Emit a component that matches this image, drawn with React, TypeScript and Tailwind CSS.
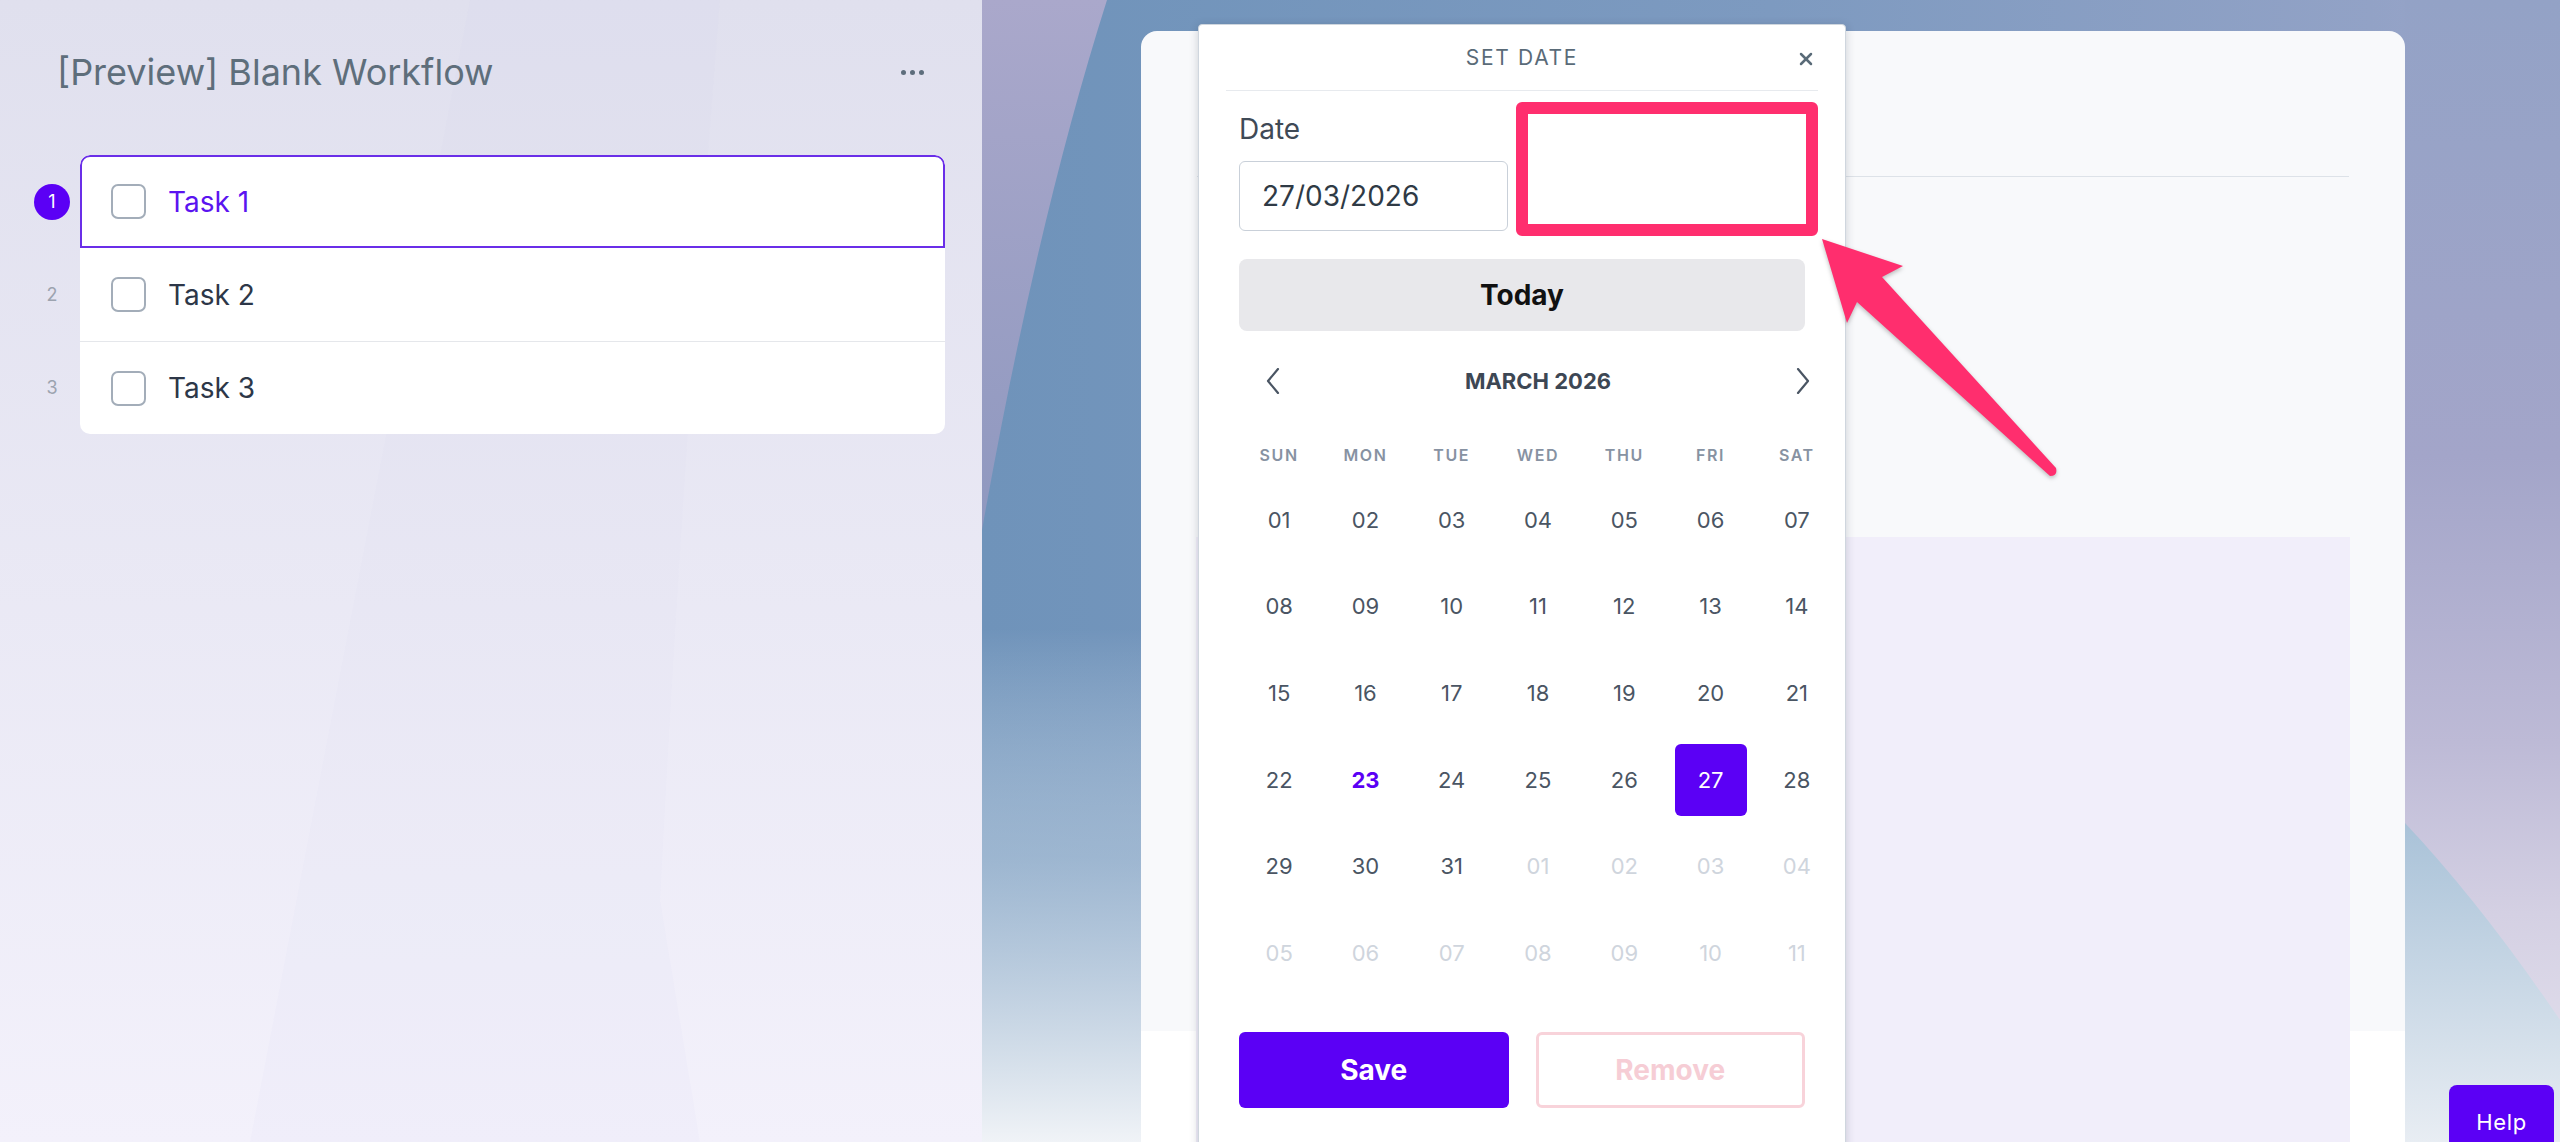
import { X } from 'lucide-react'

const WEEKDAYS = ['SUN', 'MON', 'TUE', 'WED', 'THU', 'FRI', 'SAT']

type Day = { label: string; muted?: boolean; selected?: boolean; today?: boolean }

// March 2026 starts on a Sunday, 6 rows shown
const DAYS: Day[] = [
  ...Array.from({ length: 31 }, (_, i) => ({
    label: String(i + 1).padStart(2, '0'),
    selected: i + 1 === 27,
    today: i + 1 === 23,
  })),
  ...Array.from({ length: 11 }, (_, i) => ({ label: String(i + 1).padStart(2, '0'), muted: true })),
]

const TASKS = ['Task 1', 'Task 2', 'Task 3']

function Checkbox() {
  return <div className="h-[35px] w-[35px] shrink-0 rounded-[7px] border-2 border-[#a3adb9] bg-white" />
}

function Chevron({ dir }: { dir: 'left' | 'right' }) {
  return (
    <svg width="14" height="26" viewBox="0 0 14 26" fill="none" stroke="#4a5563" strokeWidth="2.2" strokeLinecap="round" strokeLinejoin="round">
      {dir === 'left' ? <path d="M12 1 L2 13 L12 25" /> : <path d="M2 1 L12 13 L2 25" />}
    </svg>
  )
}

function Backdrop() {
  // wallpaper drawing behind the right side
  return (
    <svg className="absolute inset-0" width="1578" height="1142" viewBox="0 0 1578 1142">
      <defs>
        <linearGradient id="bgH" x1="0" x2="1" y1="0" y2="0">
          <stop offset="0" stopColor="#6f93ba" />
          <stop offset="0.5" stopColor="#7d9ac0" />
          <stop offset="0.88" stopColor="#92a2c6" />
          <stop offset="1" stopColor="#9ea6ca" />
        </linearGradient>
        <linearGradient id="fadeL" x1="0" x2="0" y1="0" y2="1">
          <stop offset="0" stopColor="#ffffff" stopOpacity="0" />
          <stop offset="0.55" stopColor="#ffffff" stopOpacity="0" />
          <stop offset="0.75" stopColor="#c9d8e6" stopOpacity="0.5" />
          <stop offset="0.92" stopColor="#dfe7ef" stopOpacity="0.88" />
          <stop offset="1" stopColor="#f0f3f7" stopOpacity="1" />
        </linearGradient>
        <linearGradient id="rightV" x1="0" x2="0" y1="0" y2="1">
          <stop offset="0" stopColor="#93a2c6" />
          <stop offset="0.4" stopColor="#a3a5c9" />
          <stop offset="0.65" stopColor="#bdbad6" />
          <stop offset="0.8" stopColor="#d4d0e3" />
          <stop offset="1" stopColor="#e8e5f0" />
        </linearGradient>
        <linearGradient id="blueBR" x1="0" x2="0" y1="0" y2="1">
          <stop offset="0" stopColor="#a9c2d8" />
          <stop offset="1" stopColor="#e8edf3" />
        </linearGradient>
        <linearGradient id="purp" x1="0" x2="0" y1="0" y2="1">
          <stop offset="0" stopColor="#aaa8cb" />
          <stop offset="1" stopColor="#8f98bf" />
        </linearGradient>
      </defs>
      <rect width="1578" height="1142" fill="url(#bgH)" />
      <rect width="1578" height="1142" fill="url(#fadeL)" />
      <rect x="1423" width="155" height="1142" fill="url(#rightV)" />
      <path d="M1423 823 Q1500 905 1578 1020 V1142 H1423 Z" fill="url(#blueBR)" />
      <path d="M0 0 H125 Q55 220 0 530 Z" fill="url(#purp)" />
    </svg>
  )
}

export default function App() {
  return (
    <div className="relative flex h-[1142px] w-[2560px] overflow-hidden font-['Inter',sans-serif]">
      {/* Left: workflow task list */}
      <div className="relative w-[982px] shrink-0 bg-linear-to-b from-[#e0e0ee] to-[#f3f1fb]">
        <svg className="absolute inset-0" width="982" height="1142">
          <path d="M470 0 H720 Q680 500 660 900 L700 1142 H250 Z" fill="#c9cce6" opacity="0.06" />
        </svg>
        <div className="relative">
          <div className="mt-[52px] flex h-[40px] items-center justify-between pl-[57px] pr-[58px]">
            <h1 className="text-[36px] leading-[40px] text-[#5e6e7b]">[Preview] Blank Workflow</h1>
            <div className="flex gap-[4px]">
              <span className="h-[5px] w-[5px] rounded-full bg-[#5d6d7c]" />
              <span className="h-[5px] w-[5px] rounded-full bg-[#5d6d7c]" />
              <span className="h-[5px] w-[5px] rounded-full bg-[#5d6d7c]" />
            </div>
          </div>

          <div className="mt-[63px] flex pl-[34px]">
            <div className="mr-[10px] flex w-[36px] flex-col">
              {TASKS.map((_, i) => (
                <div key={i} className="flex h-[93px] items-center justify-center">
                  {i === 0 ? (
                    <div className="flex h-[36px] w-[36px] items-center justify-center rounded-full bg-[#5b00f5] text-[18px] text-white">1</div>
                  ) : (
                    <span className="text-[18px] text-[#9ca3af]">{i + 1}</span>
                  )}
                </div>
              ))}
            </div>
            <div className="w-[865px] overflow-hidden rounded-[10px] bg-white">
              <div className="flex h-[93px] items-center gap-[22px] rounded-t-[10px] border-2 border-[#6a2ee8] pl-[29px]">
                <Checkbox />
                <span className="text-[28px] text-[#5b14f0]">Task 1</span>
              </div>
              <div className="flex h-[94px] items-center gap-[22px] border-b border-[#e5e7eb] pl-[31px]">
                <Checkbox />
                <span className="text-[28px] text-[#2d3748]">Task 2</span>
              </div>
              <div className="flex h-[92px] items-center gap-[22px] pl-[31px]">
                <Checkbox />
                <span className="text-[28px] text-[#2d3748]">Task 3</span>
              </div>
            </div>
          </div>
        </div>
      </div>

      {/* Right: task detail behind the date dialog */}
      <div className="relative h-[1142px] flex-1">
        <Backdrop />
        <div className="relative pl-[159px] pr-[155px] pt-[31px]">
          <div className="h-[1111px] rounded-t-[16px] bg-[linear-gradient(to_bottom,#f8f9fb_1000px,#ffffff_1000px)] pt-px">
            <div className="mx-[56px] h-[145px] border-b-[1.5px] border-[#dde2e8]" />
            <div className="mx-[55px] mt-[360px] h-[610px] bg-[#f1eefa]" />
          </div>
        </div>

        {/* Set date popover */}
        <div className="absolute left-[216px] top-[24px] h-[1140px] w-[648px] rounded-[4px] border-[1.5px] border-[#cfd6de] bg-white shadow-[0_2px_10px_rgba(30,41,59,0.2)]">
          <div className="relative mx-[27px] flex h-[66px] items-center justify-center border-b-[1.5px] border-[#e7eaee]">
            <span className="text-[21px] tracking-[0.08em] text-[#5a6b78]">SET DATE</span>
            <X className="absolute right-[2px] top-[24px]" size={20} strokeWidth={3} color="#5a6b78" />
          </div>

          <div className="px-[40px]">
            <div className="mt-[21px] h-[34px] text-[28px] leading-[34px] text-[#3f4a56]">Date</div>
            <div className="mt-[15px] flex h-[70px] w-[269px] items-center rounded-[6px] border-[1.5px] border-[#c9d0d9] pl-[22px] text-[28px] text-[#2f3a45]">
              27/03/2026
            </div>
            <button className="mt-[28px] flex h-[72px] w-full items-center justify-center rounded-[8px] bg-[#e8e8eb] text-[28px] font-bold text-[#111111]">
              Today
            </button>

            <div className="ml-[-3px] w-[604px]">
              <div className="mt-[25px] flex h-[50px] items-center justify-between px-[30px]">
                <Chevron dir="left" />
                <span className="text-[22px] font-bold text-[#3d4754]">MARCH 2026</span>
                <Chevron dir="right" />
              </div>

              <div className="mt-[27px] grid h-[44px] grid-cols-7 items-center">
                {WEEKDAYS.map(d => (
                  <span key={d} className="text-center text-[16px] font-semibold tracking-[0.1em] text-[#8792a2]">{d}</span>
                ))}
              </div>

              <div className="grid auto-rows-[86.67px] grid-cols-7">
                {DAYS.map((d, i) => (
                  <div key={i} className="flex items-center justify-center">
                    {d.selected ? (
                      <div className="flex h-[72px] w-[72px] items-center justify-center rounded-[6px] bg-[#5b00f5] text-[22px] text-white">{d.label}</div>
                    ) : (
                      <span
                        className={
                          d.today
                            ? 'text-[22px] font-bold text-[#5b00f5]'
                            : d.muted
                              ? 'text-[22px] text-[#cfd5dd]'
                              : 'text-[22px] text-[#4a5563]'
                        }
                      >
                        {d.label}
                      </span>
                    )}
                  </div>
                ))}
              </div>
            </div>

            <div className="mt-[35px] grid h-[76px] grid-cols-2 gap-[27px]">
              <button className="rounded-[6px] bg-[#5b00f5] text-[28px] font-bold text-white">Save</button>
              <button className="rounded-[6px] border-[3px] border-[#f8d3da] bg-white text-[28px] font-bold text-[#f6cdd5]">Remove</button>
            </div>
          </div>
        </div>
      </div>

      {/* Annotation: highlight box + arrow */}
      <div className="absolute left-[1516px] top-[102px] h-[134px] w-[302px] rounded-[6px] border-[12px] border-[#ff2e6e]" />
      <svg className="absolute left-[1800px] top-[220px] drop-shadow-[0_2px_2px_rgba(0,0,0,0.25)]" width="280" height="280" viewBox="1800 220 280 280">
        <path d="M1822 239 L1903 266 L1882 277 L2056 468 Q2058 476 2050 476 L1857 302 L1847 323 Z" fill="#ff2e6e" />
      </svg>

      {/* Help tab */}
      <div className="absolute left-[2449px] top-[1085px] flex h-[74px] w-[105px] items-center justify-center rounded-t-[8px] bg-[#5b00f5] text-[22px] tracking-[0.03em] text-white">
        Help
      </div>
    </div>
  )
}
